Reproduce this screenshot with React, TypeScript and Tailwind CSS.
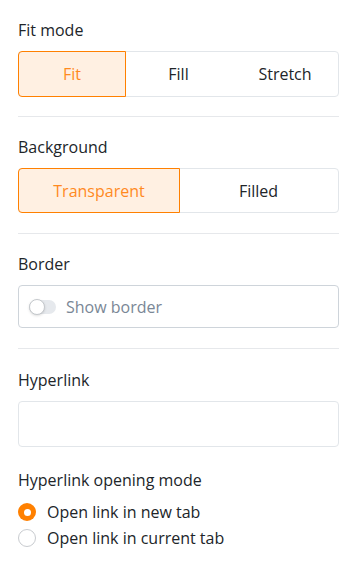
import React from "react";

export default function App() {
  const font = { fontFamily: '"Open Sans", "Noto Sans", sans-serif' };
  return (
    <div className="w-[357px] h-[572px] bg-white px-[18px] pt-[19px] text-[16px] font-[375] text-[#212529]" style={font}>
      <div className="leading-[22px]">Fit mode</div>
      <div className="mt-[10px] flex h-[46px] rounded-[4px] border border-[#e2e6ea]">
        <div className="-m-px flex w-[108px] items-center justify-center rounded-l-[4px] border border-[#ff8000] bg-[#fff0e2] text-[#ff8a1f]">Fit</div>
        <div className="flex w-[107px] items-center justify-center">Fill</div>
        <div className="flex flex-1 items-center justify-center">Stretch</div>
      </div>
      <div className="mt-[19px] h-px bg-[#e6e8eb]" />

      <div className="mt-[19px] leading-[22px]">Background</div>
      <div className="mt-[10px] flex h-[45px] rounded-[4px] border border-[#e2e6ea]">
        <div className="-m-px flex w-[162px] items-center justify-center rounded-l-[4px] border border-[#ff8000] bg-[#fff0e2] text-[#ff8a1f]">Transparent</div>
        <div className="flex flex-1 items-center justify-center">Filled</div>
      </div>
      <div className="mt-[20px] h-px bg-[#e6e8eb]" />

      <div className="mt-[19px] leading-[22px]">Border</div>
      <div className="mt-[10px] flex h-[43px] items-center rounded-[4px] border border-[#ced4da] pl-[10px]">
        <div className="relative h-[14px] w-[27px] rounded-full bg-[#e6e9ed]">
          <div className="absolute left-0 top-[-1px] h-[16px] w-[16px] rounded-full border border-[#c4c8cc] bg-white shadow-sm" />
        </div>
        <span className="ml-[10px] text-[#7a8796]">Show border</span>
      </div>
      <div className="mt-[20px] h-px bg-[#e6e8eb]" />

      <div className="mt-[20px] leading-[22px]">Hyperlink</div>
      <div className="mt-[10px] h-[46px] rounded-[4px] border border-[#e2e6ea]" />

      <div className="mt-[22px] leading-[22px]">Hyperlink opening mode</div>
      <div className="mt-[11px] flex h-[20px] items-center">
        <div className="flex h-[18px] w-[18px] items-center justify-center rounded-full bg-[#ff8000]">
          <div className="h-[7px] w-[7px] rounded-full bg-white" />
        </div>
        <span className="ml-[11px] leading-[20px]">Open link in new tab</span>
      </div>
      <div className="mt-[6px] flex h-[20px] items-center">
        <div className="h-[18px] w-[18px] rounded-full border border-[#c8cbcf] bg-white" />
        <span className="ml-[11px] leading-[20px]">Open link in current tab</span>
      </div>
    </div>
  );
}
